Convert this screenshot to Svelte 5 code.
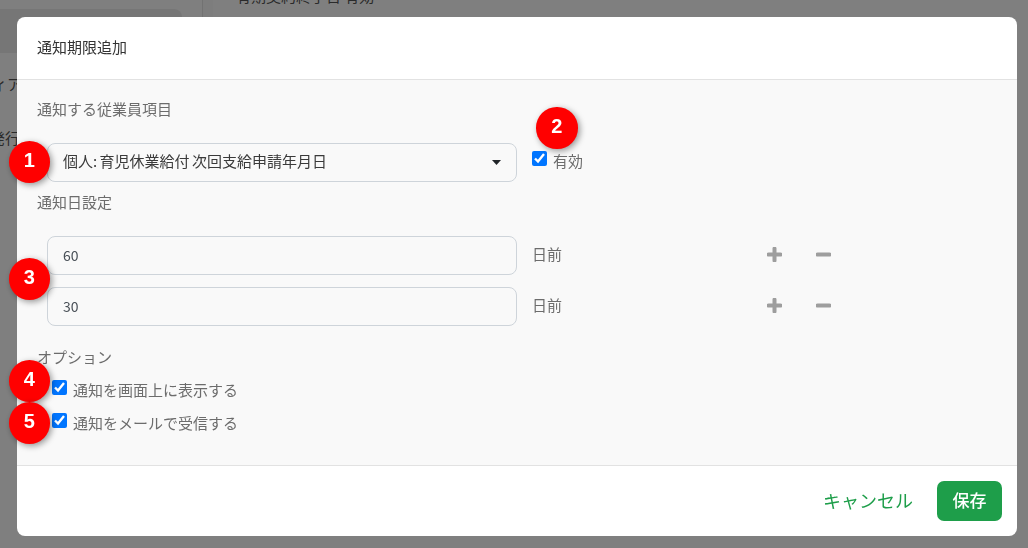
<script>
  const dayRows = [60, 30];
  const badges = [
    { n: 1, x: 8.5, y: 141 },
    { n: 2, x: 536, y: 107 },
    { n: 3, x: 8.5, y: 258 },
    { n: 4, x: 8.5, y: 360 },
    { n: 5, x: 8.5, y: 402 }
  ];
</script>

<div class="page">
  <aside class="side">
    <div class="side-block"></div>
    <p class="side-a">ィア</p>
    <p class="side-b">発行</p>
  </aside>
  <main class="content">
    <p class="content-line">有期契約終了日 有効</p>
  </main>
</div>

<div class="backdrop"></div>

<div class="modal">
  <header class="head">通知期限追加</header>

  <section class="body">
    <div class="label first">通知する従業員項目</div>
    <div class="row">
      <div class="select">
        <span>個人: 育児休業給付 次回支給申請年月日</span>
        <svg width="9" height="5" viewBox="0 0 9 5"><path d="M0 0h9L4.5 5z" fill="#212529" /></svg>
      </div>
      <label class="active">
        <input type="checkbox" checked />
        <span>有効</span>
      </label>
    </div>

    <div class="label second">通知日設定</div>
    <div class="days">
      {#each dayRows as d}
        <div class="row">
          <input class="num" type="text" value={d} />
          <span class="unit">日前</span>
          <svg class="plus" width="15" height="15" viewBox="0 0 15 15">
            <path d="M7.5 1.5v12M1.5 7.5h12" stroke="#9e9e9e" stroke-width="4" stroke-linecap="round" />
          </svg>
          <svg class="minus" width="15" height="15" viewBox="0 0 15 15">
            <path d="M1.5 7.5h12" stroke="#9e9e9e" stroke-width="4" stroke-linecap="round" />
          </svg>
        </div>
      {/each}
    </div>

    <div class="label third">オプション</div>
    <div class="options">
      <label class="opt">
        <input type="checkbox" checked />
        <span>通知を画面上に表示する</span>
      </label>
      <label class="opt">
        <input type="checkbox" checked />
        <span>通知をメールで受信する</span>
      </label>
    </div>
  </section>

  <footer class="foot">
    <button class="cancel" type="button">キャンセル</button>
    <button class="save" type="button">保存</button>
  </footer>
</div>

{#each badges as b}
  <div class="badge" style="left: {b.x}px; top: {b.y}px">{b.n}</div>
{/each}

<style>
  :global(body) {
    margin: 0;
    font-family: "Noto Sans CJK JP", "Liberation Sans", sans-serif;
    overflow: hidden;
  }

  .page {
    display: flex;
    align-items: flex-start;
    width: 1028px;
    height: 548px;
    background: #fff;
    overflow: hidden;
  }

  .side {
    width: 202px;
    height: 160px;
    border-right: 1px solid #e4e4e4;
    font-size: 15px;
    color: #555;
  }

  .side-block {
    width: 182px;
    height: 44px;
    margin-top: 9px;
    background: #ececec;
    border-radius: 0 8px 0 0;
  }

  .side-a,
  .side-b {
    overflow: hidden;
    white-space: nowrap;
    direction: rtl;
    line-height: 22px;
  }

  .side-a {
    width: 22px;
    margin: 20px 0 0;
  }

  .side-b {
    width: 20px;
    margin: 32px 0 0;
  }

  .content {
    flex: 1;
    height: 100px;
    border-left: 10px solid #fafafa;
  }

  .content-line {
    margin: -15px 0 0 23px;
    font-size: 15px;
    line-height: 22px;
    color: #555;
  }

  .backdrop {
    position: fixed;
    inset: 0;
    background: rgba(0, 0, 0, 0.5);
  }

  .modal {
    position: fixed;
    left: 17px;
    top: 17px;
    width: 1000px;
    height: 519px;
    background: #fff;
    border-radius: 8px;
    display: flex;
    flex-direction: column;
    overflow: hidden;
    font-size: 15px;
    color: #6c6c6c;
  }

  .head {
    height: 62px;
    line-height: 59px;
    padding-left: 20px;
    border-bottom: 1px solid #e2e2e2;
    color: #333;
    font-size: 15px;
  }

  .body {
    height: 385px;
    box-sizing: border-box;
    background: #f9f9f9;
    padding: 18px 20px 0;
  }

  .label {
    line-height: 22px;
  }

  .label.first {
    margin-bottom: 23px;
  }

  .label.second {
    margin-top: 9px;
    margin-bottom: 23px;
  }

  .label.third {
    margin-top: 20px;
    margin-bottom: 6px;
  }

  .row {
    display: flex;
    align-items: center;
    margin-left: 10px;
  }

  .select,
  .num {
    box-sizing: border-box;
    width: 470px;
    height: 39px;
    border: 1px solid #ced4da;
    border-radius: 8px;
    background: #f9f9f9;
    font-family: inherit;
  }

  .select {
    display: flex;
    align-items: center;
    justify-content: space-between;
    padding: 0 15px;
    color: #3a3a3a;
    font-size: 15px;
    word-spacing: -1px;
  }

  .select span {
    position: relative;
    top: -2px;
  }

  .num {
    padding: 0 15px 2px;
    font-size: 14px;
    color: #495057;
    outline: none;
  }

  .active {
    display: flex;
    align-items: flex-start;
    align-self: flex-start;
    margin-left: 15px;
    padding-top: 8px;
  }

  input[type="checkbox"] {
    width: 15px;
    height: 15px;
    margin: 0;
    flex: none;
  }

  .active span {
    margin: -1px 0 0 6px;
    line-height: 22px;
  }

  .days {
    display: flex;
    flex-direction: column;
    gap: 12px;
  }

  .unit {
    width: 235px;
    margin-left: 15px;
    position: relative;
    top: -2px;
  }

  .plus,
  .minus {
    position: relative;
    top: -1px;
  }

  .minus {
    margin-left: 34px;
  }

  .options {
    margin-left: 15px;
  }

  .opt {
    display: flex;
    align-items: flex-start;
    height: 33px;
    padding-top: 6px;
    box-sizing: border-box;
  }

  .opt span {
    margin: -1px 0 0 6px;
    line-height: 22px;
  }

  .foot {
    flex: 1;
    display: flex;
    align-items: center;
    justify-content: flex-end;
    border-top: 1px solid #e2e2e2;
    padding-right: 15px;
    gap: 24px;
  }

  button {
    border: 0;
    background: none;
    font-family: inherit;
    padding: 0;
    cursor: pointer;
  }

  .cancel {
    color: #1e9e4a;
    font-size: 18px;
    padding-bottom: 2px;
  }

  .save {
    width: 65px;
    height: 40px;
    background: #1e9e4a;
    border-radius: 7px;
    color: #fff;
    font-size: 17px;
    font-weight: 500;
    padding-bottom: 3px;
  }

  .badge {
    position: fixed;
    width: 41.5px;
    height: 41.5px;
    border-radius: 50%;
    background: #ff0000;
    color: #fff;
    font-family: "Liberation Sans", sans-serif;
    font-weight: 700;
    font-size: 20px;
    line-height: 39px;
    text-align: center;
    box-shadow: 2px 2px 6px rgba(0, 0, 0, 0.4);
  }
</style>
